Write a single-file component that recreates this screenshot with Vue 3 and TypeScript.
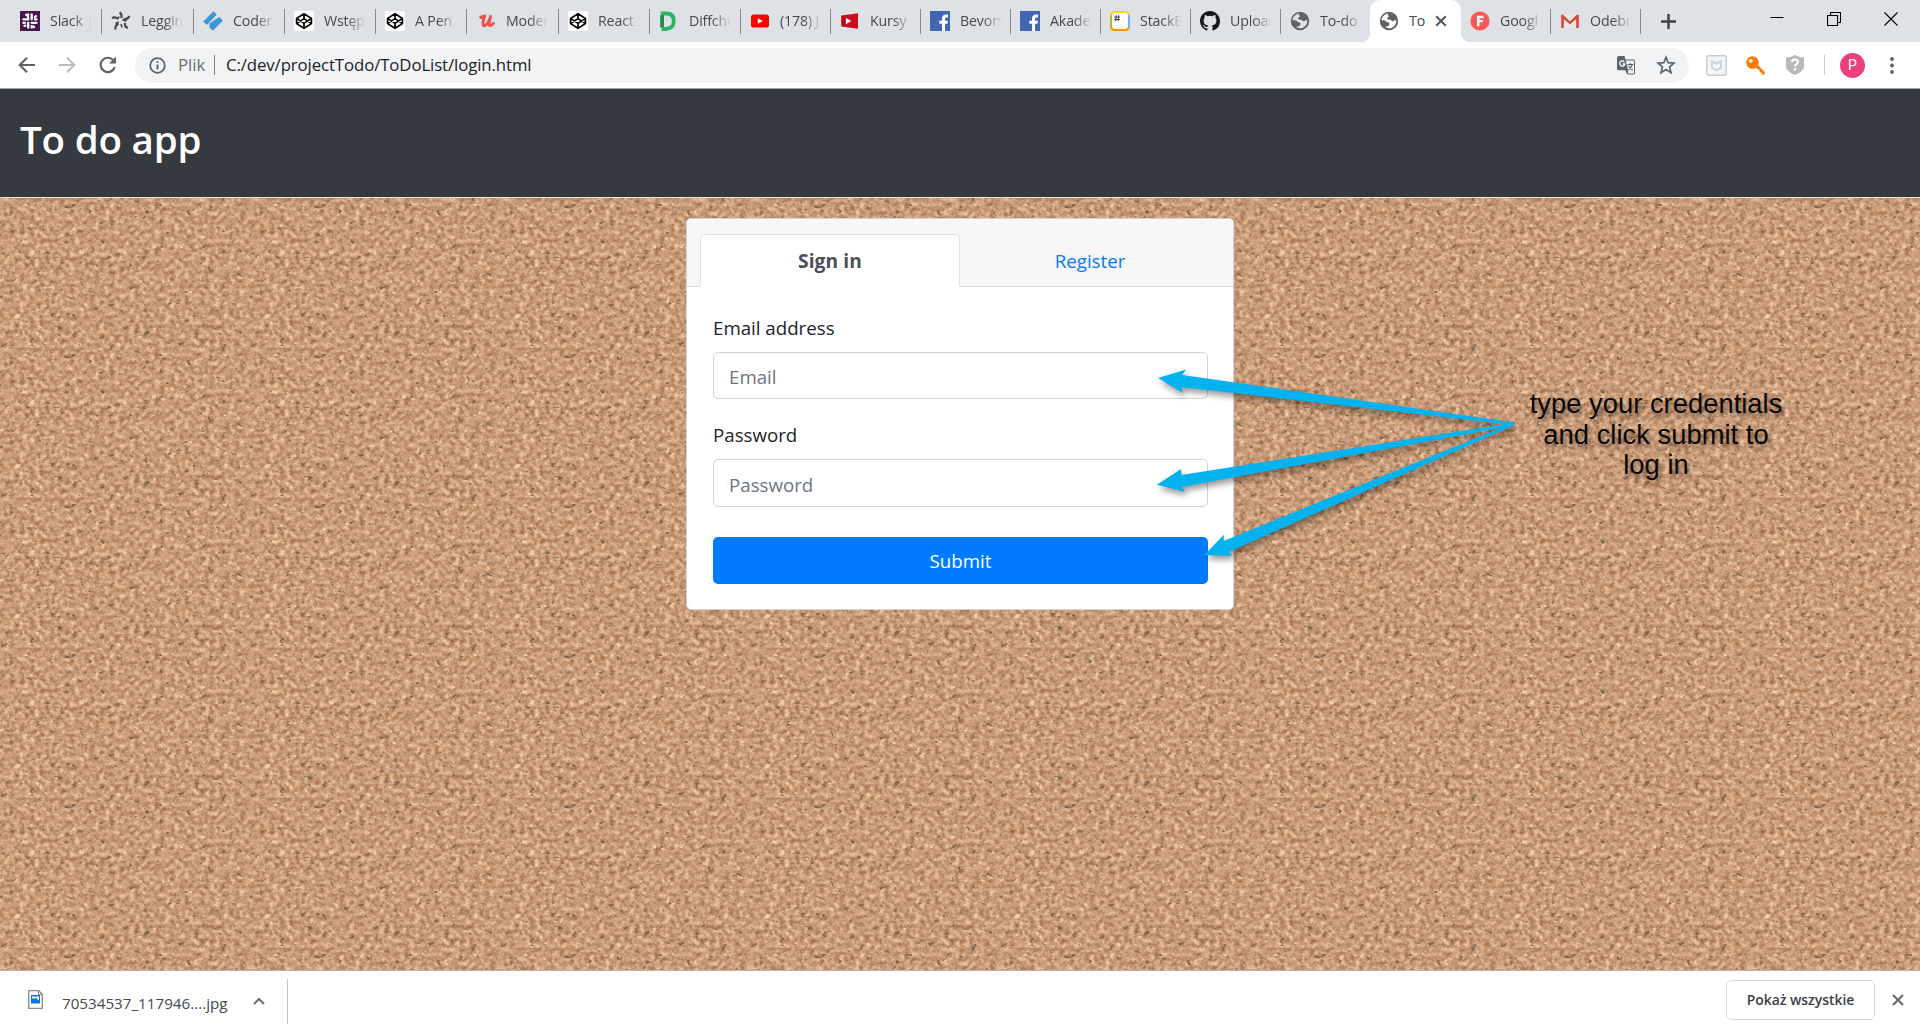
<script setup lang="ts">
interface Tab {
  icon: string
  title: string
  width: number
  active?: boolean
  noLine?: boolean
}

const tabs: Tab[] = [
  { icon: 'slack', title: 'Slack | cod', width: 92 },
  { icon: 'star', title: 'Leggings', width: 92 },
  { icon: 'coder', title: 'Coders', width: 91 },
  { icon: 'codepen', title: 'Wstęp d', width: 91 },
  { icon: 'codepen', title: 'A Pen', width: 91 },
  { icon: 'udemy', title: 'Modern', width: 92 },
  { icon: 'codepen', title: 'React S', width: 91 },
  { icon: 'diff', title: 'Diffche', width: 91 },
  { icon: 'youtube', title: '(178) J', width: 90 },
  { icon: 'kursy', title: 'Kursy', width: 90 },
  { icon: 'facebook', title: 'Bevors', width: 90 },
  { icon: 'facebook', title: 'Akadem', width: 90 },
  { icon: 'stack', title: 'StackBl', width: 90 },
  { icon: 'github', title: 'Upload', width: 90 },
  { icon: 'globe', title: 'To-do l', width: 89, noLine: true },
  { icon: 'globe', title: 'To', width: 91, active: true },
  { icon: 'figma', title: 'Googl', width: 90 },
  { icon: 'gmail', title: 'Odebra', width: 90 },
]
</script>

<template>
  <div class="window">
    <header class="tabstrip">
      <div
        v-for="(tab, i) in tabs"
        :key="i"
        class="tab"
        :class="{ active: tab.active, noline: tab.noLine }"
        :style="{ width: tab.width + 'px' }"
      >
        <svg class="favicon" viewBox="0 0 20 20">
          <template v-if="tab.icon === 'slack'">
            <rect width="20" height="20" fill="#4a154b" />
            <g stroke="#fff" stroke-width="2.3" stroke-linecap="round" fill="none">
              <path d="M8.200 6.800v1.600M8.200 3.400v.1M3.400 8.300h4.800M11.700 3.400v4.900M16.500 8.300h-1.500M11.700 11.800h4.800M11.700 16.500v-1.400M8.200 11.800v4.800M3.400 11.800h1.500M6.200 3.800 8 5M16 5.200l-1.100 1M4.500 14.900l.8-.3M14 16l-.8-.6" />
            </g>
          </template>
          <g v-else-if="tab.icon === 'star'" fill="none" stroke="#45474a" stroke-width="2.2">
            <path d="M8.500 1.500q3 2 1.700 5.500M18.500 5q-2 4-5.800 2.800M17 17q-3.600-.8-3-5M4.400 18.500q-.6-4 3.200-6M1 7.200q3-2.200 6.200.8" />
            <path d="M8 5.500 7 8M15.500 10.300l-4-1.600M11 16.500l-1-3.500M4.500 12.500l3-1.500" stroke-width="1.500" />
          </g>
          <g v-else-if="tab.icon === 'coder'" fill="#3c97d9">
            <path d="M0.300 10.500 10.500.300 14 3.700 3.800 14z" />
            <path d="M6.500 11.500 16.300 5.800 19.800 9.800 9.800 19.800 6.500 16.500z" />
            <path d="M14 3.700 6.500 11.300v1.200L16.300 5.800z" fill="#dee1e6" />
          </g>
          <template v-else-if="tab.icon === 'codepen'">
            <rect width="20" height="20" rx="2" fill="#fff" />
            <path d="M10 2.700 17.400 7.400v5.200L10 17.300 2.600 12.600V7.400zM2.600 7.400 10 12.400l7.400-5M2.600 12.600 10 7.600l7.400 5M10 2.700v4.900M10 12.400v4.900" fill="none" stroke="#000" stroke-width="1.700" stroke-linejoin="round" />
          </template>
          <path v-else-if="tab.icon === 'udemy'" d="M2.600 6.600q3.800-1.500 5.200-1.600C6.500 8 4.400 15.500 7.700 14.600 10.500 13.800 13 8 13.600 5.400 12.600 9.500 11 15 13.200 14.700q2.300-.8 4-3.200" fill="none" stroke="#ec5252" stroke-width="2.900" stroke-linejoin="round" transform="translate(1)" />
          <g v-else-if="tab.icon === 'diff'" fill="none" stroke="#2bb563" stroke-width="3.800">
            <path d="M3.100 4v12.500" stroke="#1f8a4a" />
            <path d="M1.800 2.500h5.500q7.500 0 7.500 7.500t-8 8H2.500" />
          </g>
          <g v-else-if="tab.icon === 'youtube'">
            <rect x="1" y="3.500" width="18" height="13" rx="2.600" fill="#f00" />
            <path d="M7.800 7.300v5.400l5-2.700z" fill="#fff" />
          </g>
          <g v-else-if="tab.icon === 'kursy'">
            <path d="M1.500 4.500 18 2.200v15.600L1.500 15.500z" fill="#cf0a1e" />
            <path d="m1.500 4.500 8 5.500-8 5.500z" fill="#ad0a1e" />
            <path d="M5.800 7v6.200l5.600-3.100z" fill="#fff" />
          </g>
          <g v-else-if="tab.icon === 'facebook'">
            <rect width="20" height="20" fill="#4267b2" />
            <path d="M12 20v-7.200H9.300V9.800H12V7.500C12 4.700 13.700 3.400 16 3.400l2 .1v2.900h-1.400c-1.200 0-1.500.6-1.500 1.500v1.900h2.800l-.4 3h-2.400V20z" fill="#fff" />
          </g>
          <g v-else-if="tab.icon === 'stack'" fill="none" stroke-width="2">
            <rect x="1" y="1" width="18" height="18" rx="3.500" fill="#fff" />
            <path d="M1 4v12q0 1 1 2" stroke="#a4c614" />
            <path d="M19 4v12q0 1-1 2" stroke="#6db1ff" />
            <path d="M1.200 4.200Q1.500 1 4.500 1h11q3 0 3.300 3.200" stroke="#fdd32b" />
            <path d="M1.200 15.800q.3 3.200 3.300 3.200h11q3 0 3.300-3.200" stroke="#ff9100" />
            <path d="M6.200 4.200 5.600 10M8.600 4.200 8 10M4 6h6M4 8.400h6" stroke="#333" stroke-width=".9" />
          </g>
          <path v-else-if="tab.icon === 'github'" transform="scale(1.250)" fill="#15181c" d="M8 0C3.580 0 0 3.580 0 8c0 3.540 2.290 6.530 5.470 7.590.4.070.55-.17.55-.38 0-.19-.010-.82-.010-1.490-2.010.37-2.530-.49-2.690-.94-.090-.23-.48-.94-.82-1.130-.28-.15-.68-.52-.010-.53.63-.010 1.080.58 1.230.82.72 1.210 1.870.87 2.330.66.070-.52.28-.87.510-1.070-1.780-.2-3.640-.89-3.640-3.950 0-.87.310-1.590.82-2.150-.080-.2-.36-1.020.080-2.120 0 0 .67-.21 2.200.82a7.600 7.600 0 0 1 4 0c1.530-1.040 2.200-.82 2.200-.82.44 1.100.16 1.920.080 2.120.51.56.82 1.270.82 2.150 0 3.070-1.870 3.750-3.650 3.950.29.25.54.73.54 1.480 0 1.070-.010 1.930-.010 2.200 0 .21.15.46.55.38A8.010 8.010 0 0 0 16 8c0-4.420-3.580-8-8-8z" />
          <g v-else-if="tab.icon === 'globe'">
            <circle cx="10" cy="10" r="9.200" fill="#5f6368" />
            <path :fill="tab.active ? '#fff' : '#dee1e6'" d="M2.600 9.600C2.600 6.500 5 3.200 9.200 2.600c-1 1-.6 2 .8 2.200-.2 1.500-1.800 1.500-2 2.800.2 1.300 3.600.8 4.500 2 .8 1.200 2.300.6 2.900-.4h1.800c.5 4.600-3.400 8.300-7.600 8.100-1.400-.2-2.500-.6-3.400-1.200.6-.8 2-.7 3.200-1.200 1.100-.5.8-1.700 1-2.600-.5-1.100-3-.9-3.800-2.200-.6-.9-2.400-.9-4-.5z" />
          </g>
          <g v-else-if="tab.icon === 'figma'">
            <circle cx="10" cy="10" r="9.600" fill="#ff5757" />
            <path d="M7 15.200V4.800h6.600v2.400H9.500v1.700h3.300v2.300H9.500v4z" fill="#fff" />
          </g>
          <g v-else>
            <path d="M1.500 3.700h17v13.100h-17z" fill="#e8e8e8" />
            <path d="M1.200 17V3.800h2L10 10.400l6.800-6.600h2V17h-2.600V8L10 13.600 3.800 8v9z" fill="#db4537" />
          </g>
        </svg>
        <span class="title">{{ tab.title }}</span>
        <svg v-if="tab.active" class="tabclose" viewBox="0 0 12 12"><path d="m1.200 1.200 9.600 9.600m0-9.600L1.200 10.800" stroke="#55585c" stroke-width="2.100" /></svg>
      </div>
      <svg class="newtab" viewBox="0 0 15 15"><path d="M7.500 0v15M0 7.500h15" stroke="#3c4043" stroke-width="2.400" /></svg>
      <div class="controls">
        <svg width="14" height="14" viewBox="0 0 14 14"><path d="M.5 5.500h13" stroke="#000" /></svg>
        <svg width="14" height="14" viewBox="0 0 14 14"><path d="M.5 3.500h10v10H.5zM3.500 3.500v-3h10v10h-3" fill="none" stroke="#000" stroke-width="1.100" /></svg>
        <svg width="14" height="14" viewBox="0 0 14 14"><path d="m.5.5 13 13m0-13-13 13" stroke="#000" stroke-width="1.100" /></svg>
      </div>
    </header>

    <div class="toolbar">
      <svg class="nav" viewBox="0 0 18 18"><path d="M17 9H2.500M9 1.700 1.700 9 9 16.300" fill="none" stroke="#5f6368" stroke-width="2.100" /></svg>
      <svg class="nav" viewBox="0 0 18 18"><path d="M1 9h14.500M9 1.700 16.300 9 9 16.300" fill="none" stroke="#bbbcbe" stroke-width="2.100" /></svg>
      <svg class="nav" viewBox="-.7 0 18 18"><path d="M14.600 4.200A7.200 7.200 0 1 0 16 11.200" fill="none" stroke="#5f6368" stroke-width="2.200" /><path d="M17.300.6v7h-7z" fill="#5f6368" /></svg>
      <div class="omnibox">
        <svg class="info" viewBox="0 0 17 17"><circle cx="8.500" cy="8.500" r="7.300" fill="none" stroke="#5f6368" stroke-width="1.800" /><path d="M8.500 7.500v5M8.500 4.300v1.800" stroke="#5f6368" stroke-width="1.900" /></svg>
        <span class="scheme">Plik</span>
        <i class="bar"></i>
        <span class="url">C:/dev/projectTodo/ToDoList/login.html</span>
        <svg class="translate" viewBox="0 0 18 19">
          <path d="M7 4h9.500q1 0 1 1v12q0 1-1 1h-6z" fill="#f1f3f4" stroke="#5f6368" />
          <path d="M1.500 0h6l3.800 14.300H1.500Q0 14.300 0 12.800V1.500Q0 0 1.500 0z" fill="#5f6368" />
          <path d="M8 14.300 10.300 18l1.200-3.700z" fill="#5f6368" />
          <path d="M7.300 5.800a2.600 2.600 0 1 0 .6 2.200H5.600" fill="none" stroke="#fff" stroke-width="1.300" />
          <path d="M10.500 8.600h5.800M13.200 7v1.500M15 8.800q-1 3.700-3.400 5M12 10.300q1.200 3 3.800 4" fill="none" stroke="#5f6368" stroke-width="1.100" />
        </svg>
        <svg class="fav" viewBox="0 0 20 20"><path d="m10 2.300 2.200 5.400 5.900.4-4.500 3.800 1.400 5.700-5-3.100-5 3.100 1.400-5.700-4.500-3.800 5.900-.4z" fill="none" stroke="#5f6368" stroke-width="1.700" /></svg>
      </div>
      <svg class="ext" viewBox="0 0 21 21"><rect x=".8" y=".8" width="19.400" height="19.400" rx="1.500" fill="#f3f5f6" stroke="#c6cdd1" stroke-width="1.400" /><path d="M6 6.200 10.500 8.600 15 6.200v6.600l-4.500 2.600L6 12.800z" fill="none" stroke="#ccd4d9" stroke-width="1.900" /></svg>
      <svg class="key" viewBox="0 0 19 19"><circle cx="6.500" cy="6.500" r="6.300" fill="#ff7a00" /><circle cx="4.800" cy="4.800" r="1.900" fill="#fff" /><path d="m9 11 2.300-2.400 7.500 7.300v2.700h-3v-2h-2.200v-2.200z" fill="#ff7a00" /></svg>
      <svg class="shield" viewBox="0 0 18 20"><path d="M9 0q4.500 2.600 9 2.600V11q0 5.600-9 9-9-3.400-9-9V2.600Q4.500 2.600 9 0z" fill="#b9b9b9" /><path d="M6 7.300q0-2.800 3-2.800t3 2.500c0 2-3 2.200-3 4.400" fill="none" stroke="#fff" stroke-width="2" /><circle cx="9" cy="14.200" r="1.300" fill="#fff" /></svg>
      <i class="split"></i>
      <span class="avatar">P</span>
      <svg class="dots" viewBox="0 0 4 17"><g fill="#5f6368"><circle cx="2" cy="2" r="1.900" /><circle cx="2" cy="8.500" r="1.900" /><circle cx="2" cy="15" r="1.900" /></g></svg>
    </div>

    <nav class="navbar"><h1>To do app</h1></nav>

    <main class="board">
      <section class="card">
        <div class="card-head">
          <a class="pill on">Sign in</a>
          <a class="pill">Register</a>
        </div>
        <form class="card-body" @submit.prevent>
          <label>Email address</label>
          <input type="email" placeholder="Email" />
          <label>Password</label>
          <input class="tall" type="password" placeholder="Password" />
          <button>Submit</button>
        </form>
      </section>
    </main>

    <footer class="shelf">
      <svg class="file" viewBox="0 0 15 19"><path d="M.7.700h10L14.300 4.300V18.300H.7z" fill="#fff" stroke="#8a8a8a" stroke-width="1.300" /><path d="M10.500.700v3.800h3.800" fill="none" stroke="#8a8a8a" /><path d="M3 5h9v8.500H3z" fill="#0a78d7" /><path d="M4 8.200V6.500h7v4L9.300 9.200 8 7.800 6.500 8.700z" fill="#fff" /></svg>
      <span class="fname">70534537_117946....jpg</span>
      <svg class="chev" viewBox="0 0 12 8"><path d="m1 7 5-5 5 5" fill="none" stroke="#6b6e72" stroke-width="2" /></svg>
      <i class="vline"></i>
      <button class="showall">Pokaż wszystkie</button>
      <svg class="shelfclose" viewBox="0 0 12 12"><path d="m1 1 10 10M11 1 1 11" stroke="#6b6e72" stroke-width="2.200" /></svg>
    </footer>

    <svg class="arrows" width="1920" height="1030" viewBox="0 0 1920 1030">
      <g fill="#04b2ef">
        <path d="M1158 378 1186 369.500 1182.200 374.900 1514 422.500 1514 425.200 1181 387 1183 393z" />
        <path d="M1156.800 484.700 1181 469 1181.500 475 1513.500 422.700 1514 425.400 1181.700 486.900 1185 491.700z" />
        <path d="M1204.300 555.300 1223.800 534.700 1223.800 541 1513 422.900 1514 425.300 1228.700 552 1232.600 555.700z" />
      </g>
    </svg>
    <p class="note">type your credentials<br />and click submit to<br />log in</p>
  </div>
</template>

<style>
body {
  margin: 0;
  overflow: hidden;
}
</style>

<style scoped>
.window {
  position: relative;
  display: flex;
  flex-direction: column;
  width: 1920px;
  height: 1030px;
  overflow: hidden;
  background: #fff;
  font-family: "Open Sans", "Noto Sans", sans-serif;
}
.tabstrip {
  display: flex;
  align-items: flex-start;
  box-sizing: border-box;
  flex: none;
  height: 42px;
  padding-left: 10px;
  background: #dee1e6;
}
.tab {
  position: relative;
  display: flex;
  align-items: center;
  box-sizing: border-box;
  flex: none;
  height: 42px;
  padding-left: 9px;
}
.tab:first-child {
  padding-left: 10px;
}
.tab::after {
  content: "";
  position: absolute;
  right: 0;
  top: 9px;
  width: 1px;
  height: 25px;
  background: #85888d;
}
.tab.noline::after {
  display: none;
}
.favicon {
  flex: none;
  width: 20px;
  height: 20px;
}
.title {
  width: 42px;
  margin-left: 10px;
  overflow: hidden;
  color: #45494d;
  font-size: 14.200px;
  line-height: 20px;
  letter-spacing: -0.150px;
  white-space: nowrap;
  -webkit-mask-image: linear-gradient(90deg, #000 55%, transparent);
  mask-image: linear-gradient(90deg, #000 55%, transparent);
}
.tab.active {
  border-radius: 10px 10px 0 0;
  background: #fff;
}
.tab.active::after,
.tab.active::before {
  content: "";
  position: absolute;
  top: auto;
  bottom: 0;
  width: 8px;
  height: 8px;
}
.tab.active::after {
  right: -8px;
  background: radial-gradient(circle at 100% 0, #dee1e6 7.500px, #fff 8px);
}
.tab.active::before {
  left: -8px;
  background: radial-gradient(circle at 0 0, #dee1e6 7.500px, #fff 8px);
}
.tab.active .title {
  width: 16px;
  -webkit-mask-image: none;
  mask-image: none;
}
.tabclose {
  width: 12px;
  height: 12px;
  margin-left: 10px;
}
.newtab {
  width: 15px;
  height: 15px;
  margin: 13.500px 0 0 20px;
}
.controls {
  display: flex;
  gap: 43px;
  margin: 12px 22px 0 auto;
}
.toolbar {
  display: flex;
  align-items: center;
  box-sizing: border-box;
  flex: none;
  height: 47px;
  padding-left: 18px;
  border-bottom: 1px solid #a7a5a8;
}
.nav {
  width: 18px;
  height: 18px;
  margin-right: 22px;
}
.omnibox {
  display: flex;
  align-items: center;
  box-sizing: border-box;
  width: 1554px;
  height: 35px;
  margin-left: -3px;
  padding-left: 14px;
  border-radius: 18px;
  background: #f1f3f4;
}
.info {
  width: 17px;
  height: 17px;
}
.scheme,
.url {
  margin-top: -1px;
  color: #202124;
  font-size: 16.800px;
  line-height: 30px;
  white-space: nowrap;
}
.scheme {
  width: 36px;
  margin-left: 12px;
  color: #6a6e73;
}
.bar {
  width: 1px;
  height: 20px;
  margin-right: 11px;
  background: #7c8084;
}
.url {
  letter-spacing: -0.100px;
}
.translate {
  width: 18px;
  height: 19px;
  margin-left: auto;
}
.fav {
  width: 20px;
  height: 20px;
  margin: 0 13px 0 21px;
}
.ext {
  width: 21px;
  height: 21px;
  margin-left: 17px;
}
.key {
  width: 19px;
  height: 19px;
  margin-left: 19px;
}
.shield {
  width: 18px;
  height: 20px;
  margin-left: 21px;
}
.split {
  width: 1px;
  height: 20px;
  margin-left: 20px;
  background: #c8cacd;
}
.avatar {
  width: 25px;
  height: 25px;
  margin-left: 15px;
  border-radius: 50%;
  background: #ec407a;
  color: #fff;
  font: 14px/25px Roboto, sans-serif;
  text-align: center;
}
.dots {
  width: 4px;
  height: 17px;
  margin-left: 25px;
}
.navbar {
  box-sizing: border-box;
  flex: none;
  height: 109px;
  padding: 18px 20px 0;
  border-bottom: 1px solid #e8e2dc;
  background: #343a40;
}
h1 {
  margin: 0;
  color: #fff;
  font-size: 38.500px;
  font-weight: 600;
  line-height: 64px;
  letter-spacing: -0.200px;
}
.board {
  display: flex;
  justify-content: center;
  align-items: flex-start;
  flex: 1;
  padding-top: 20px;
  background-color: #c99b77;
  background-image: url("data:image/svg+xml,%3Csvg xmlns='http://www.w3.org/2000/svg' width='250' height='150'%3E%3Cfilter id='n' x='0' y='0' width='100%25' height='100%25' color-interpolation-filters='sRGB'%3E%3CfeTurbulence type='fractalNoise' baseFrequency='.2 .22' numOctaves='4' seed='8' stitchTiles='stitch'/%3E%3CfeColorMatrix values='.36 .26 .12 0 .415 .4 .27 .13 0 .21 .4 .26 .12 0 .085 0 0 0 0 1' result='a'/%3E%3CfeTurbulence type='fractalNoise' baseFrequency='.14 .17' numOctaves='3' seed='31' stitchTiles='stitch' result='t'/%3E%3CfeColorMatrix in='t' values='0 0 0 0 .94 0 0 0 0 .81 0 0 0 0 .66 7 0 0 0 -4.7' result='b'/%3E%3CfeColorMatrix in='t' values='0 0 0 0 .5 0 0 0 0 .39 0 0 0 0 .3 0 7 0 0 -4.7' result='c'/%3E%3CfeMerge%3E%3CfeMergeNode in='a'/%3E%3CfeMergeNode in='b'/%3E%3CfeMergeNode in='c'/%3E%3C/feMerge%3E%3C/filter%3E%3Crect width='250' height='150' filter='url(%23n)'/%3E%3C/svg%3E");
}
.card {
  box-sizing: border-box;
  width: 548px;
  height: 392px;
  border: 1px solid #d5d3d1;
  border-radius: 5px;
  background: #fff;
  font-size: 18.700px;
}
.card-head {
  display: flex;
  align-items: flex-end;
  box-sizing: border-box;
  height: 68px;
  padding-left: 13px;
  border-bottom: 1px solid #d5d7d9;
  border-radius: 4px 4px 0 0;
  background: #f7f7f7;
}
.pill {
  box-sizing: border-box;
  width: 260px;
  height: 53px;
  margin-bottom: -1px;
  border: 1px solid transparent;
  border-radius: 5px 5px 0 0;
  color: #007bff;
  line-height: 51px;
  text-align: center;
}
.pill.on {
  border-color: #dee2e6 #dee2e6 #fff;
  background: #fff;
  color: #495057;
  font-size: 19.200px;
  font-weight: 700;
  letter-spacing: 0.100px;
}
.card-body {
  display: flex;
  flex-direction: column;
  padding: 25px 25px 0 26px;
}
label {
  height: 30px;
  margin-bottom: 10px;
  color: #212529;
  line-height: 32px;
}
input {
  box-sizing: border-box;
  width: 495px;
  height: 47px;
  margin: 0 0 20px;
  padding: 2px 15px 0;
  border: 1px solid #ced4da;
  border-radius: 5px;
  background: #fff;
  font: inherit;
}
input.tall {
  height: 48px;
}
input::placeholder {
  color: #6c757d;
}
.card-body button {
  width: 495px;
  height: 47px;
  margin-top: 10px;
  padding: 0;
  border: 0;
  border-radius: 5px;
  background: #007bff;
  color: #fff;
  font: inherit;
}
.shelf {
  display: flex;
  align-items: center;
  box-sizing: border-box;
  flex: none;
  height: 60px;
  padding: 0 0 2px 28px;
  border-top: 1px solid #b5b3b6;
  background: #fff;
}
.file {
  width: 15px;
  height: 19px;
}
.fname {
  width: 172px;
  margin: 7px 0 0 19px;
  color: #45494d;
  font-size: 15.200px;
  white-space: nowrap;
}
.chev {
  width: 12px;
  height: 8px;
  margin-left: 19px;
  margin-top: 2px;
}
.vline {
  width: 1px;
  height: 45px;
  margin: 4px 0 0 22px;
  background: #c5c5c5;
}
.showall {
  box-sizing: border-box;
  width: 149px;
  height: 40px;
  margin-left: auto;
  padding: 0;
  border: 1px solid #d9dbde;
  border-radius: 5px;
  background: #fff;
  color: #3c4043;
  font: 600 13.900px "Open Sans", sans-serif;
  white-space: nowrap;
}
.shelfclose {
  width: 12px;
  height: 12px;
  margin: 0 16px 0 17px;
}
.arrows {
  position: absolute;
  left: 0;
  top: 0;
  filter: drop-shadow(2px 4px 3px rgba(0, 0, 0, 0.4));
}
.note {
  position: absolute;
  left: 1506px;
  top: 389px;
  width: 300px;
  margin: 0;
  color: #0a0705;
  font: 27.400px/30.670px "Liberation Sans", Arial, sans-serif;
  text-align: center;
  text-shadow: 2px 4px 4px rgba(0, 0, 0, 0.4);
}
</style>
